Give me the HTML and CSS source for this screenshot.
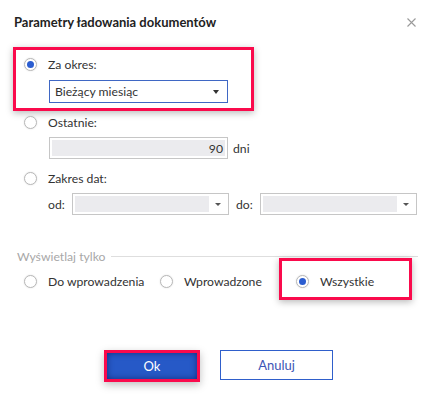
FILE: index.html
```html
<!DOCTYPE html>
<html lang="pl">
<head>
<meta charset="utf-8">
<title>Parametry ładowania dokumentów</title>
<link rel="stylesheet" href="styles.css">
</head>
<body>
<div class="dialog">
  <div class="header">
    <h1 class="title">Parametry ładowania dokumentów</h1>
    <span class="close"><svg width="9" height="9" viewBox="0 0 9 9"><path d="M0.5 0.5L8.5 8.5M8.5 0.5L0.5 8.5" stroke="#9a9a9a" stroke-width="1.1" fill="none"/></svg></span>
  </div>

  <div class="highlight period">
    <div class="radio-row"><span class="radio checked"></span><span class="lbl">Za okres:</span></div>
    <div class="select"><span class="select-text">Bieżący miesiąc</span><span class="caret"></span></div>
  </div>

  <div class="options">
    <div class="radio-row row-last"><span class="radio"></span><span class="lbl">Ostatnie:</span></div>
    <div class="days-row">
      <div class="input num"><span class="fill">90</span></div>
      <span class="unit">dni</span>
    </div>
    <div class="radio-row row-range"><span class="radio"></span><span class="lbl">Zakres dat:</span></div>
    <div class="dates-row">
      <span class="date-lbl">od:</span>
      <div class="input date"><span class="fill"></span><span class="caret small"></span></div>
      <span class="date-lbl to">do:</span>
      <div class="input date"><span class="fill"></span><span class="caret small"></span></div>
    </div>
  </div>

  <div class="legend-row"><span class="legend">Wyświetlaj tylko</span><span class="rule"></span></div>

  <div class="filter-row">
    <div class="filter-item item-1"><span class="radio"></span><span class="lbl">Do wprowadzenia</span></div>
    <div class="filter-item item-2"><span class="radio"></span><span class="lbl">Wprowadzone</span></div>
    <div class="filter-item highlight all"><span class="radio checked"></span><span class="lbl">Wszystkie</span></div>
  </div>

  <div class="buttons">
    <button class="btn btn-ok">Ok</button>
    <button class="btn btn-cancel">Anuluj</button>
  </div>
</div>
</body>
</html>
```

FILE: styles.css
```css
* { box-sizing: border-box; }
html, body { margin: 0; padding: 0; background: #fff; }
body {
  width: 437px;
  height: 405px;
  overflow: hidden;
  font-family: Lato, "Noto Sans", sans-serif;
  font-size: 12.2px;
  color: #333;
}
.dialog { display: flex; flex-direction: column; }

.header {
  height: 44px;
  display: flex;
  align-items: center;
  justify-content: space-between;
  padding: 0 21px 0 14px;
}
.title {
  margin: 0;
  font-size: 13px;
  font-weight: 700;
  color: #222;
}
.close { display: flex; }

.highlight {
  border: 3px solid #fa0a4c;
  box-shadow: 0 2px 7px rgba(0, 0, 0, 0.28);
}

.period {
  margin: 3px 0 0 13px;
  width: 241px;
  height: 64px;
  padding: 4px 0 0 8px;
}

.radio-row {
  height: 20px;
  display: flex;
  align-items: center;
  gap: 11px;
}
.radio {
  width: 13px;
  height: 13px;
  border-radius: 50%;
  border: 1px solid #b8b8b8;
  background: #fff;
  flex: 0 0 13px;
  display: flex;
  align-items: center;
  justify-content: center;
  box-shadow: 0 0 2px rgba(0, 0, 0, 0.12);
}
.radio.checked::after {
  content: "";
  width: 7px;
  height: 7px;
  border-radius: 50%;
  background: #2b5dd0;
}

.select {
  margin: 6px 0 0 25px;
  width: 179px;
  height: 23px;
  border: 1px solid #3f67c4;
  display: flex;
  align-items: center;
  justify-content: space-between;
  padding: 0 8px 0 5px;
  color: #333;
}
.caret {
  width: 0;
  height: 0;
  border-left: 3.5px solid transparent;
  border-right: 3.5px solid transparent;
  border-top: 4px solid #333;
}
.caret.small {
  border-left-width: 3px;
  border-right-width: 3px;
  border-top-width: 3px;
  border-top-color: #555;
  margin: 0 5px 0 6px;
}

.options {
  display: flex;
  flex-direction: column;
  padding-left: 24px;
}
.row-last { margin-top: 1px; }
.row-range { margin-top: 9px; }

.days-row {
  margin: 5px 0 0 25px;
  display: flex;
  align-items: center;
  gap: 5px;
}
.input {
  height: 22px;
  border: 1px solid #c6c6c6;
  padding: 2px;
  display: flex;
  align-items: stretch;
}
.fill {
  flex: 1;
  background: #ebebee;
  display: flex;
  align-items: center;
}
.num { width: 179px; }
.num .fill { justify-content: flex-end; padding-right: 2px; }

.dates-row {
  margin: 5px 0 0 24px;
  display: flex;
  align-items: center;
}
.date-lbl { width: 24px; }
.date-lbl.to { margin-left: 7px; }
.date { width: 157px; align-items: center; }
.date .fill { align-self: stretch; }

.legend-row {
  margin: 35px 19px 0 17px;
  height: 12px;
  display: flex;
  align-items: center;
  gap: 6px;
}
.legend { color: #a8a8a8; }
.rule { flex: 1; height: 1px; background: #dedede; }

.filter-row {
  margin-top: -4px;
  padding-left: 24px;
  height: 42px;
  display: flex;
  align-items: center;
}
.filter-item {
  display: flex;
  align-items: center;
  gap: 11px;
}
.item-1 { width: 136px; padding-top: 4px; }
.item-2 { width: 119px; padding-top: 4px; }
.all {
  width: 133px;
  height: 42px;
  padding: 4px 0 0 14px;
}

.buttons {
  margin-top: 50px;
  display: flex;
  justify-content: center;
  align-items: flex-start;
  gap: 20px;
}
.btn {
  font-family: inherit;
  font-size: 13px;
  margin: 0;
  cursor: pointer;
}
.btn-ok {
  width: 96px;
  height: 32px;
  border: 3px solid #fa0a4c;
  background: #2659c7;
  color: #fff;
  box-shadow: inset 0 0 6px rgba(0, 10, 60, 0.55), 0 3px 8px rgba(0, 0, 0, 0.25);
}
.btn-cancel {
  width: 113px;
  height: 30px;
  border: 1px solid #2f5fcb;
  background: #fff;
  color: #3d55b5;
}
```
